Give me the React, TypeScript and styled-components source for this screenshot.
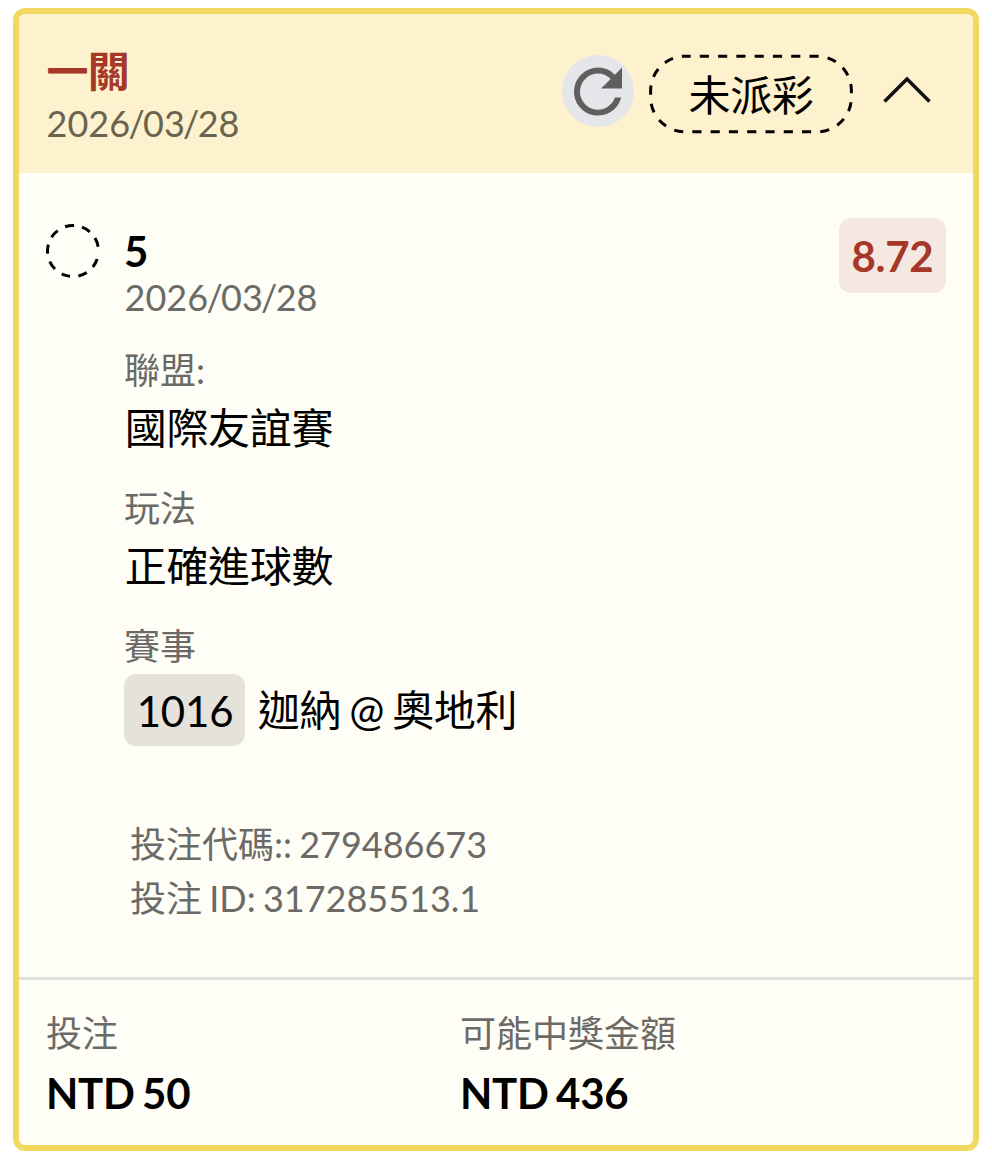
import React from 'react';
import styled, { createGlobalStyle } from 'styled-components';

const GlobalStyle = createGlobalStyle`
  *, *::before, *::after { box-sizing: border-box; }
  body {
    margin: 0;
    background: #ffffff;
    color: #000000;
    font-family: Lato, 'Noto Sans CJK TC', sans-serif;
  }
`;

const Card = styled.article`
  width: 966px;
  height: 1143px;
  margin: 8px 0 0 13px;
  border: 6px solid #f3d85f;
  border-radius: 12px;
  background: #fffef6;
  overflow: hidden;
  display: flex;
  flex-direction: column;
`;

const Header = styled.header`
  display: flex;
  justify-content: space-between;
  height: 159px;
  padding: 31px 42px 0 27.6px;
  background: #fdf2cd;
`;

const Title = styled.h1`
  margin: 0;
  font-size: 42px;
  line-height: 52px;
  font-weight: 700;
  letter-spacing: -0.8px;
  color: #a6382a;
`;

const DateText = styled.div<{ $onHeader?: boolean }>`
  padding-top: ${(p) => (p.$onHeader ? 1 : 0)}px;
  font-size: 36px;
  line-height: ${(p) => (p.$onHeader ? 50 : 44)}px;
  color: ${(p) => (p.$onHeader ? '#6a6350' : '#6b6a66')};
`;

const Slash = styled.span`
  margin: 0 -1.7px;
`;

const Actions = styled.div`
  display: flex;
  align-items: flex-start;
  padding-top: 9px;
`;

const RefreshButton = styled.button`
  width: 72px;
  height: 72px;
  margin: 1px 15px 0 0;
  padding: 0;
  border: 0;
  border-radius: 50%;
  background: #e5e6e9;
  color: #5f5f5f;
`;

const StatusPill = styled.div`
  position: relative;
  width: 204px;
  height: 80px;
  padding-top: 2px;
  font-size: 42px;
  line-height: 79px;
  letter-spacing: -0.4px;
  text-align: center;
`;

const PillOutline = styled.svg`
  position: absolute;
  top: 0;
  left: 0;
`;

const ToggleButton = styled.button`
  width: 48px;
  height: 32px;
  margin: 19px 0 0 30px;
  padding: 0;
  border: 0;
  background: none;
`;

const Leg = styled.section`
  display: flex;
  align-items: flex-start;
  flex: 1;
  padding: 45px 27px 0;
`;

const PendingMark = styled.svg`
  flex: none;
  margin: 6px 24px 0 0;
`;

const Details = styled.div`
  flex: 1;
  padding-top: 8px;
`;

const LegNumber = styled.div`
  font-size: 42px;
  line-height: 50px;
  font-weight: 700;
`;

const LegDate = styled.div`
  margin: -1px 0 0 0.6px;
`;

const Field = styled.div<{ $gap: number }>`
  margin-top: ${(p) => p.$gap}px;
`;

const Label = styled.div`
  font-size: 36px;
  line-height: 44px;
  color: #6b6a66;
`;

const Value = styled.div`
  margin: 8px 0 0 0.7px;
  font-size: 42px;
  line-height: 57px;
  letter-spacing: -0.3px;
`;

const Match = styled.div`
  display: flex;
  align-items: center;
  margin-top: 6px;
  font-size: 42px;
  line-height: 72px;
`;

const MatchCode = styled.span`
  width: 121px;
  height: 72px;
  margin-right: 13px;
  padding: 1px 0 0 1px;
  border-radius: 12px;
  background: #e5e2dc;
  letter-spacing: -0.2px;
  text-align: center;
`;

const Teams = styled.span`
  letter-spacing: -0.4px;
  word-spacing: -2.2px;
`;

const Codes = styled.div`
  margin: 71px 0 0 6px;
  font-size: 36px;
  line-height: 54px;
  word-spacing: -2px;
  color: #6b6a66;
`;

const Odds = styled.div`
  width: 107px;
  height: 75px;
  padding-top: 1px;
  border-radius: 12px;
  background: #f5e8e1;
  color: #a6382a;
  font-size: 42px;
  line-height: 75px;
  font-weight: 700;
  letter-spacing: -0.3px;
  text-align: center;
`;

const Footer = styled.footer`
  display: grid;
  grid-template-columns: 414px 1fr;
  height: 168px;
  padding: 31px 27px 0;
  border-top: 3px solid #e3e1db;
`;

const Amount = styled.div`
  margin-top: 13px;
  font-size: 42px;
  line-height: 50px;
  font-weight: 700;
  letter-spacing: -0.3px;
  word-spacing: -2.4px;
`;

const pendingDashes = '9 8.2 '.repeat(8) + '9 100';

function FormattedDate({ parts, onHeader }: { parts: string[]; onHeader?: boolean }) {
  return (
    <DateText $onHeader={onHeader}>
      {parts.map((part, i) => (
        <React.Fragment key={i}>
          {i > 0 && <Slash>/</Slash>}
          {part}
        </React.Fragment>
      ))}
    </DateText>
  );
}

const matchDate = ['2026', '03', '28'];

export default function App() {
  return (
    <>
      <GlobalStyle />
      <Card>
        <Header>
          <div>
            <Title>一關</Title>
            <FormattedDate parts={matchDate} onHeader />
          </div>
          <Actions>
            <RefreshButton aria-label="refresh">
              <svg width="72" height="72" viewBox="0 0 24 24" fill="currentColor" display="block">
                <path
                  transform="translate(0 0.2)"
                  d="M17.65 6.35A7.96 7.96 0 0 0 12 4a8 8 0 1 0 7.73 10h-2.08A6 6 0 1 1 12 6c1.66 0 3.14.69 4.22 1.78L13 11h7V4z"
                />
              </svg>
            </RefreshButton>
            <StatusPill>
              <PillOutline width="204" height="80" fill="none" stroke="#000" strokeWidth="3">
                <rect
                  x="1.6"
                  y="2.2"
                  width="200.8"
                  height="75.6"
                  rx="34.5"
                  strokeDasharray="9.14 9.14"
                  strokeDashoffset="-14.7"
                />
              </PillOutline>
              未派彩
            </StatusPill>
            <ToggleButton aria-label="collapse">
              <svg width="48" height="32" fill="none" stroke="#111" strokeWidth="3.6" display="block">
                <path d="M1.5 28.5 24 6 46.5 28.5" />
              </svg>
            </ToggleButton>
          </Actions>
        </Header>

        <Leg>
          <PendingMark width="54" height="54" fill="none" stroke="#000" strokeWidth="3">
            <circle
              cx="27"
              cy="27"
              r="25.5"
              strokeDasharray={pendingDashes}
              transform="rotate(18.5 27 27)"
            />
          </PendingMark>
          <Details>
            <LegNumber>5</LegNumber>
            <LegDate>
              <FormattedDate parts={matchDate} />
            </LegDate>
            <Field $gap={29}>
              <Label>聯盟:</Label>
              <Value>國際友誼賽</Value>
            </Field>
            <Field $gap={29}>
              <Label>玩法</Label>
              <Value>正確進球數</Value>
            </Field>
            <Field $gap={29}>
              <Label>賽事</Label>
              <Match>
                <MatchCode>1016</MatchCode>
                <Teams>迦納 @ 奧地利</Teams>
              </Match>
            </Field>
            <Codes>
              <div>投注代碼:: 279486673</div>
              <div>投注 ID: 317285513.1</div>
            </Codes>
          </Details>
          <Odds>8.72</Odds>
        </Leg>

        <Footer>
          <div>
            <Label>投注</Label>
            <Amount>NTD 50</Amount>
          </div>
          <div>
            <Label>可能中獎金額</Label>
            <Amount>NTD 436</Amount>
          </div>
        </Footer>
      </Card>
    </>
  );
}
